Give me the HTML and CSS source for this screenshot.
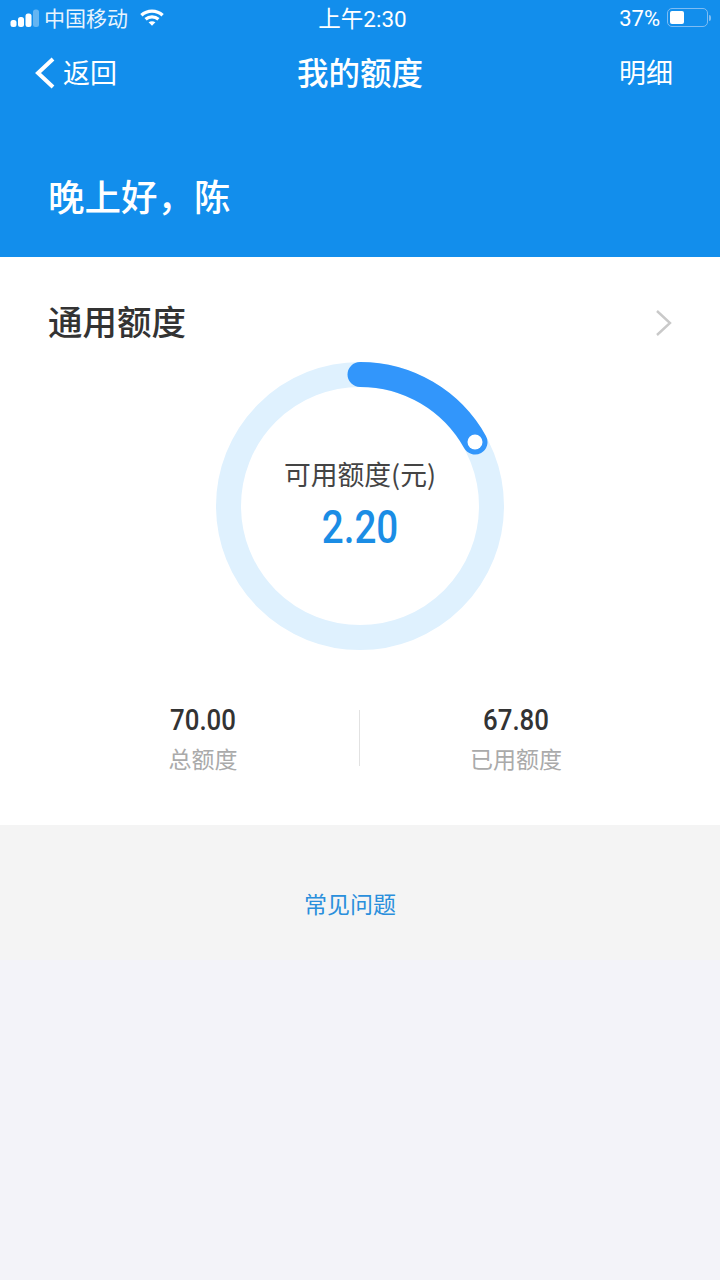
FILE: index.html
```html
<!DOCTYPE html>
<html lang="zh-CN">
<head>
  <meta charset="UTF-8">
  <meta name="viewport" content="width=device-width, initial-scale=1.0">
  <title>我的额度</title>
  <link rel="stylesheet" href="styles.css">
</head>
<body>
  <div class="header">
    <div class="status-bar">
      <div class="status-left">
        <svg class="signal" width="30" height="18" viewBox="0 0 30 18">
          <rect x="0.5" y="11" width="6" height="7" rx="2.5" fill="#fff"/>
          <rect x="8" y="8" width="6" height="10" rx="2.5" fill="#fff"/>
          <rect x="15.5" y="4.5" width="6" height="13.5" rx="2.5" fill="#fff"/>
          <rect x="23" y="0.5" width="6" height="17.5" rx="2.5" fill="#fff" fill-opacity="0.35"/>
        </svg>
        <span class="carrier">中国移动</span>
        <svg class="wifi" width="24" height="17" viewBox="0 0 26 18" fill="none" stroke="#fff" stroke-width="3.6">
          <path d="M1.5 6.5C8 0.5 18 0.5 24.5 6.5"/>
          <path d="M6 11C10 7.5 16 7.5 20 11"/>
          <path d="M13 18L9.3 14.2C11.4 12.6 14.6 12.6 16.7 14.2Z" fill="#fff" stroke="none"/>
        </svg>
      </div>
      <div class="status-time">上午2:30</div>
      <div class="status-right">
        <span class="percent">37%</span>
        <div class="battery"><div class="battery-fill"></div></div>
        <div class="battery-tip"></div>
      </div>
    </div>
    <div class="nav">
      <div class="nav-back">
        <svg width="22" height="32" viewBox="0 0 22 32" fill="none" stroke="#fff" stroke-width="4">
          <path d="M19 2L4 16L19 30"/>
        </svg>
        <span>返回</span>
      </div>
      <div class="nav-title">我的额度</div>
      <div class="nav-detail">明细</div>
    </div>
    <div class="greeting">晚上好，陈</div>
  </div>

  <div class="card">
    <div class="card-head">
      <h2>通用额度</h2>
      <svg width="18" height="28" viewBox="0 0 18 28" fill="none" stroke="#c9c9c9" stroke-width="2.4">
        <path d="M2 2L15 14L2 26"/>
      </svg>
    </div>
    <div class="ring">
      <svg width="288" height="288" viewBox="0 0 288 288" fill="none">
        <circle cx="144" cy="144" r="131.5" stroke="#dff1fe" stroke-width="25"/>
        <path d="M144 12.5A131.5 131.5 0 0 1 259 80" stroke="#3296fb" stroke-width="25" stroke-linecap="round"/>
        <circle cx="259" cy="80" r="7.5" fill="#fff"/>
      </svg>
      <div class="ring-text">
        <div class="ring-label">可用额度(元)</div>
        <div class="ring-value">2.20</div>
      </div>
    </div>
    <div class="stats">
      <div class="stat">
        <div class="stat-value">70.00</div>
        <div class="stat-label">总额度</div>
      </div>
      <div class="stat-line"></div>
      <div class="stat">
        <div class="stat-value">67.80</div>
        <div class="stat-label">已用额度</div>
      </div>
    </div>
  </div>

  <div class="faq-wrap">
    <div class="faq">常见问题</div>
  </div>
</body>
</html>
```

FILE: styles.css
```css
* {
  box-sizing: border-box;
}
body {
  margin: 0;
  height: 1280px;
  overflow: hidden;
  background-color: #f3f3f9;
  font-family: "Noto Sans CJK SC", "Roboto", sans-serif;
}
.header {
  height: 257px;
  background-color: #128eec;
  color: white;
}
.status-bar {
  height: 33px;
  margin-bottom: 2px;
  padding: 0 9px 0 10px;
  display: grid;
  grid-template-columns: 1fr auto 1fr;
  align-items: center;
  font-size: 21px;
}
.status-left {
  display: flex;
  align-items: center;
}
.signal,
.battery,
.battery-tip,
.wifi {
  position: relative;
  top: 1px;
}
.percent {
  position: relative;
  top: 2px;
}
.carrier {
  margin-left: 4px;
  line-height: 24px;
  color: #e8f4fd;
}
.wifi {
  margin-left: 12px;
}
.status-time {
  margin-left: 4px;
  font-family: "Roboto", "Noto Sans CJK SC", sans-serif;
  font-size: 22.5px;
}
.status-right {
  display: flex;
  align-items: center;
  justify-content: flex-end;
  font-family: "Roboto", sans-serif;
  font-size: 22px;
}
.battery {
  width: 41px;
  height: 19px;
  margin-left: 7px;
  padding: 2px;
  border: 1.5px solid #7ebcf3;
  border-radius: 5px;
}
.battery-fill {
  width: 14px;
  height: 100%;
  background-color: white;
  border-radius: 2px;
}
.battery-tip {
  width: 2px;
  height: 6px;
  margin-left: 1px;
  background-color: #7ebcf3;
  border-radius: 0 2px 2px 0;
}
.nav {
  height: 72px;
  padding: 0 47px 0 34px;
  display: flex;
  align-items: center;
  justify-content: space-between;
  position: relative;
}
.nav-back {
  display: flex;
  align-items: center;
  font-size: 27px;
}
.nav-back svg {
  margin-right: 7px;
  position: relative;
  top: 2px;
}
.nav-title {
  position: absolute;
  left: 0;
  right: 0;
  text-align: center;
  font-size: 31.5px;
  font-weight: 500;
}
.nav-detail {
  font-size: 27px;
}
.greeting {
  margin-top: 63px;
  padding-left: 48px;
  font-size: 36.5px;
  line-height: 52px;
  font-weight: 500;
}
.card {
  height: 568px;
  background-color: white;
}
.card-head {
  height: 105px;
  padding: 37px 47px 0 48px;
  display: flex;
  align-items: flex-start;
  justify-content: space-between;
  color: #333;
}
.card-head h2 {
  margin: 0;
  font-size: 34.5px;
  line-height: 52px;
  font-weight: 500;
}
.card-head svg {
  margin-top: 15px;
}
.ring {
  width: 288px;
  height: 288px;
  margin: 0 auto;
  position: relative;
}
.ring-text {
  position: absolute;
  left: 0;
  right: 0;
  top: 94px;
  text-align: center;
}
.ring-label {
  font-size: 26.8px;
  line-height: 36px;
  color: #444;
}
.ring-value {
  margin-top: 8px;
  font-family: "Roboto", sans-serif;
  font-size: 46px;
  line-height: 54px;
  font-weight: 500;
  color: #1b8de5;
  transform: scaleX(0.84);
}
.stats {
  margin-top: 50px;
  padding: 0 48px 0 47px;
  display: grid;
  grid-template-columns: 1fr 1px 1fr;
  align-items: center;
}
.stat {
  text-align: center;
}
.stat-value {
  font-family: "Roboto", sans-serif;
  font-size: 30px;
  line-height: 40px;
  font-weight: 500;
  color: #333;
  transform: scaleX(0.86);
}
.stat-label {
  font-size: 23px;
  line-height: 36px;
  color: #aaa;
}
.stat-line {
  height: 56px;
  background-color: #e2e2e2;
}
.faq-wrap {
  height: 135px;
  background-color: #f4f4f4;
  padding: 60px 20px 0 0;
}
.faq {
  text-align: center;
  font-size: 23px;
  line-height: 36px;
  color: #2a8fdc;
}
```
